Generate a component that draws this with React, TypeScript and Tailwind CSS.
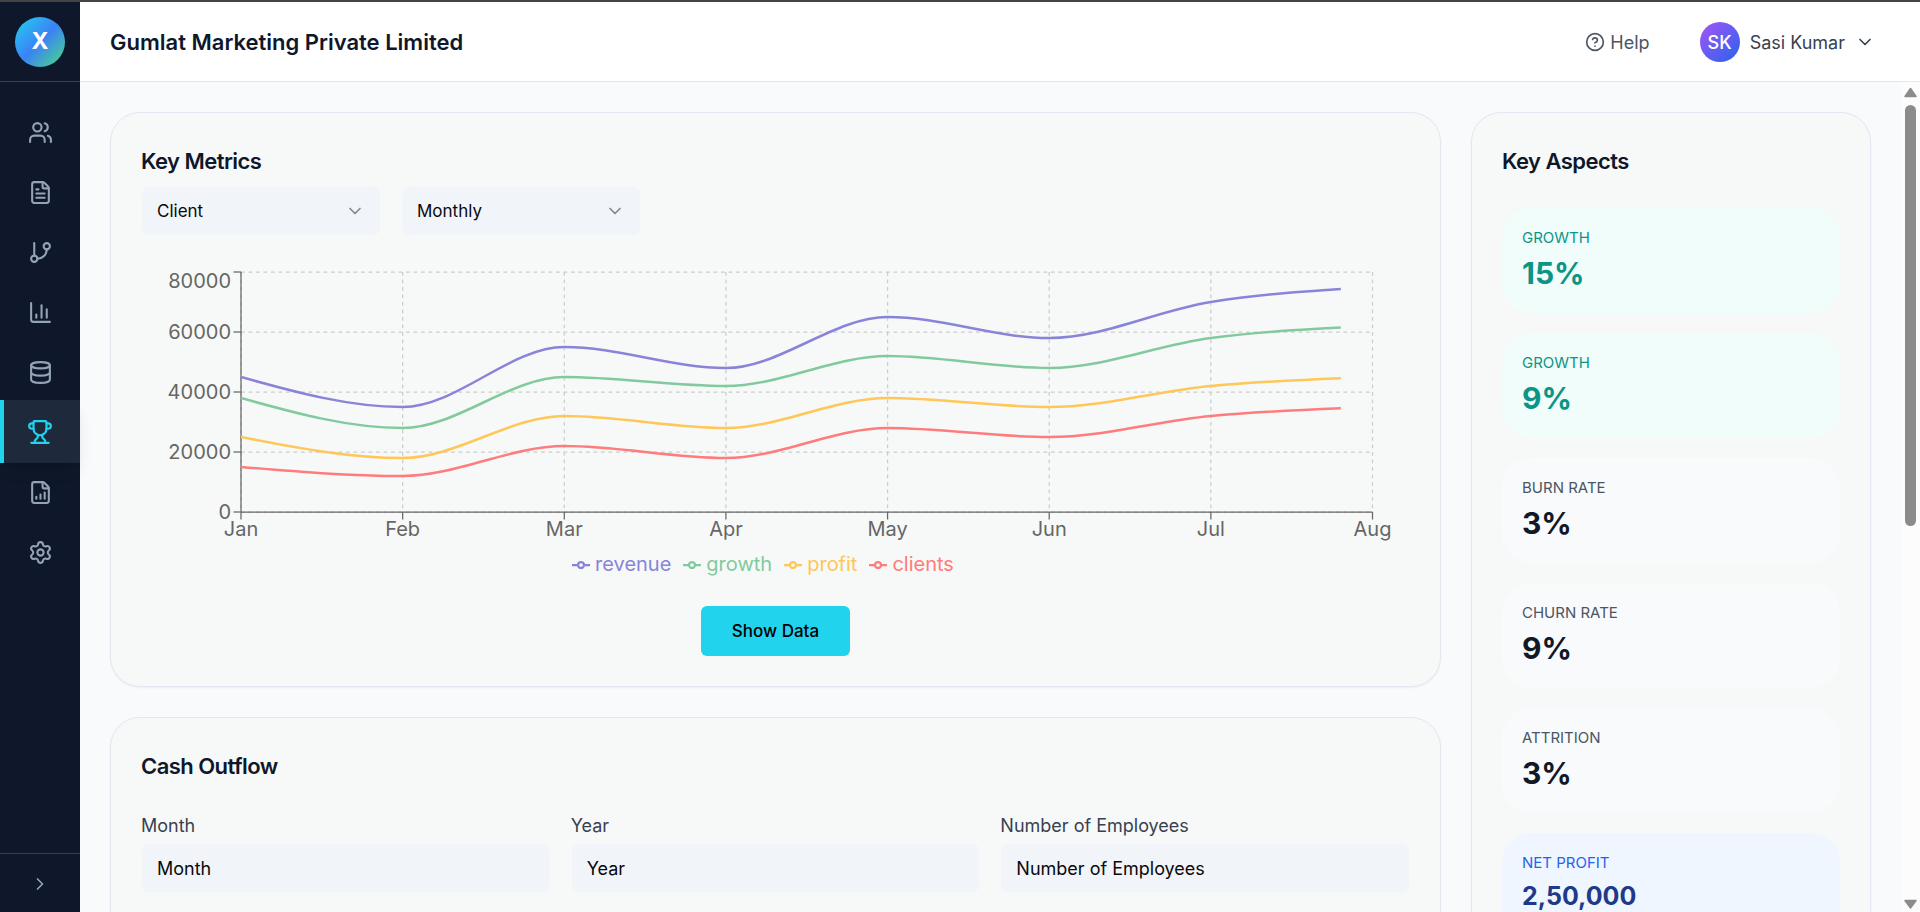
import { useEffect, useId, useRef, useState } from "react";
import type { LucideIcon } from "lucide-react";
import {
  ChartColumn,
  ChevronDown,
  ChevronRight,
  CircleQuestionMark,
  Database,
  FileChartColumnIncreasing,
  FileText,
  GitBranch,
  Settings,
  Trophy,
  Users,
} from "lucide-react";

type Point = [number, number];

const navItems: { label: string; icon: LucideIcon; active?: boolean }[] = [
  { label: "Clients", icon: Users },
  { label: "Documents", icon: FileText },
  { label: "Workflows", icon: GitBranch },
  { label: "Analytics", icon: ChartColumn },
  { label: "Data", icon: Database },
  { label: "Performance", icon: Trophy, active: true },
  { label: "Reports", icon: FileChartColumnIncreasing },
  { label: "Settings", icon: Settings },
];

const months = ["Jan", "Feb", "Mar", "Apr", "May", "Jun", "Jul", "Aug"];

const series = [
  { name: "revenue", color: "#8884d8", values: [45000, 35000, 55000, 48000, 65000, 58000, 70000, 75000] },
  { name: "growth", color: "#82ca9d", values: [38000, 28000, 45000, 42000, 52000, 48000, 58000, 62000] },
  { name: "profit", color: "#ffc658", values: [25000, 18000, 32000, 28000, 38000, 35000, 42000, 45000] },
  { name: "clients", color: "#ff7c7c", values: [15000, 12000, 22000, 18000, 28000, 25000, 32000, 35000] },
];

const aspects = [
  { label: "GROWTH", value: "15%", card: "bg-[#f0fdfa]", labelColor: "text-[#0d9488]", valueStyle: "text-3xl leading-[40px] text-[#0d9488]" },
  { label: "GROWTH", value: "9%", card: "bg-[#f0fdfa]", labelColor: "text-[#0d9488]", valueStyle: "text-3xl leading-[40px] text-[#0d9488]" },
  { label: "BURN RATE", value: "3%", card: "bg-[#f9fafc]", labelColor: "text-[#4b5563]", valueStyle: "text-3xl leading-[40px] text-[#111827]" },
  { label: "CHURN RATE", value: "9%", card: "bg-[#f9fafc]", labelColor: "text-[#4b5563]", valueStyle: "text-3xl leading-[40px] text-[#111827]" },
  { label: "ATTRITION", value: "3%", card: "bg-[#f9fafc]", labelColor: "text-[#4b5563]", valueStyle: "text-3xl leading-[40px] text-[#111827]" },
  { label: "NET PROFIT", value: "2,50,000", card: "bg-[#eff6ff]", labelColor: "text-[#2563eb]", valueStyle: "text-[25px] leading-[36px] text-[#1e3a8a]" },
];

// Monotone cubic interpolation, so the curve never overshoots its points.
function monotonePath(points: Point[]): string {
  const n = points.length;
  const slopes: number[] = [];
  for (let i = 0; i < n - 1; i++) {
    slopes.push((points[i + 1][1] - points[i][1]) / (points[i + 1][0] - points[i][0]));
  }
  const tangents: number[] = new Array(n).fill(0);
  for (let i = 1; i < n - 1; i++) {
    const a = slopes[i - 1];
    const b = slopes[i];
    tangents[i] =
      (Math.sign(a) + Math.sign(b)) * Math.min(Math.abs(a), Math.abs(b), 0.5 * Math.abs((a + b) / 2)) || 0;
  }
  tangents[0] = (3 * slopes[0] - tangents[1]) / 2;
  tangents[n - 1] = (3 * slopes[n - 2] - tangents[n - 2]) / 2;

  let d = `M${points[0][0]},${points[0][1]}`;
  for (let i = 0; i < n - 1; i++) {
    const [x0, y0] = points[i];
    const [x1, y1] = points[i + 1];
    const dx = (x1 - x0) / 3;
    d += `C${x0 + dx},${y0 + dx * tangents[i]},${x1 - dx},${y1 - dx * tangents[i + 1]},${x1},${y1}`;
  }
  return d;
}

function MetricsChart() {
  const box = useRef<HTMLDivElement>(null);
  const [width, setWidth] = useState(1269);
  const clipId = useId();

  useEffect(() => {
    const node = box.current;
    if (!node) return;
    const observer = new ResizeObserver(([entry]) => setWidth(entry.contentRect.width));
    observer.observe(node);
    return () => observer.disconnect();
  }, []);

  const left = 100;
  const right = width - 37.5;
  const top = 6;
  const bottom = 246;
  const step = (right - left) / (months.length - 1);
  const yOf = (value: number) => bottom - (value / 80000) * (bottom - top);

  return (
    <div ref={box} className="w-full">
      <svg width={width} height={283} className="block" role="img" aria-label="Monthly key metrics">
        <defs>
          <clipPath id={clipId}>
            <rect x={left} y={0} width={(right - left) * 0.972} height={283} />
          </clipPath>
        </defs>
        <g stroke="#ccc" strokeWidth="1.25" strokeDasharray="3.75 3.75">
          {[0, 20000, 40000, 60000, 80000].map((v) => (
            <line key={v} x1={left} x2={right} y1={yOf(v)} y2={yOf(v)} />
          ))}
          {months.map((m, i) => (
            <line key={m} x1={left + i * step} x2={left + i * step} y1={top} y2={bottom} />
          ))}
        </g>
        <g stroke="#666" strokeWidth="1.25">
          <line x1={left} x2={right} y1={bottom} y2={bottom} />
          <line x1={left} x2={left} y1={top} y2={bottom} />
          {[0, 20000, 40000, 60000, 80000].map((v) => (
            <line key={v} x1={left - 7.5} x2={left} y1={yOf(v)} y2={yOf(v)} />
          ))}
          {months.map((m, i) => (
            <line key={m} x1={left + i * step} x2={left + i * step} y1={bottom} y2={bottom + 7.5} />
          ))}
        </g>
        <g fill="#666" fontSize="20">
          {[0, 20000, 40000, 60000, 80000].map((v) => (
            <text key={v} x={left - 10} y={Math.max(yOf(v), 15) + 7} textAnchor="end">
              {v}
            </text>
          ))}
          {months.map((m, i) => (
            <text key={m} x={left + i * step} y={bottom + 24} textAnchor="middle">
              {m}
            </text>
          ))}
        </g>
        <g fill="none" strokeWidth="2.5" clipPath={`url(#${clipId})`}>
          {series.map((s) => (
            <path
              key={s.name}
              stroke={s.color}
              d={monotonePath(s.values.map((v, i): Point => [left + i * step, yOf(v)]))}
            />
          ))}
        </g>
      </svg>
      <ul className="flex justify-center pr-[38px] pl-[25px] text-xl leading-[30px]">
        {series.map((s) => (
          <li key={s.name} className="mr-3 flex items-center gap-[5px]" style={{ color: s.color }}>
            <svg width="18" height="18" viewBox="0 0 32 32" fill="none" stroke="currentColor" strokeWidth="4" className="mt-0.5" aria-hidden="true">
              <path d="M0,16h10.667A5.333,5.333,0,1,1,21.333,16H32M21.333,16A5.333,5.333,0,1,1,10.667,16" />
            </svg>
            {s.name}
          </li>
        ))}
      </ul>
    </div>
  );
}

function FilterSelect({ label, options }: { label: string; options: string[] }) {
  return (
    <div className="relative w-60">
      <select
        aria-label={label}
        className="h-[50px] w-full appearance-none rounded-lg border border-[#f7f9f8] bg-[#f1f4f9] px-[15px] pt-0.5 text-[17px] text-[#0a0a0a]"
      >
        {options.map((o) => (
          <option key={o}>{o}</option>
        ))}
      </select>
      <ChevronDown size={20} strokeWidth={2} className="pointer-events-none absolute top-[15px] right-4 text-[#858789]" />
    </div>
  );
}

function Field({ label }: { label: string }) {
  const id = useId();
  return (
    <div className="flex min-w-0 flex-1 flex-col gap-[5px]">
      <label htmlFor={id} className="text-[18px] leading-[25px] text-[#374151]">
        {label}
      </label>
      <input
        id={id}
        placeholder={label}
        className="h-[50px] w-full rounded-lg border border-[#f7f9f8] bg-[#f1f4f9] px-[15px] text-[18px] placeholder:text-[#0a0a0a]"
      />
    </div>
  );
}

function Scrollbar() {
  return (
    <div aria-hidden="true" className="flex w-[19px] shrink-0 flex-col items-center bg-[#fcfcfc] pt-[5px] pb-0.5">
      <svg width="13" height="11" viewBox="0 0 13 11">
        <path d="M6.5 1.5 12 9.5H1z" fill="#8b8b8b" stroke="#8b8b8b" strokeWidth="1.5" strokeLinejoin="round" />
      </svg>
      <div className="my-[7px] min-h-0 w-full flex-1">
        <div className="mx-auto h-[53.5%] w-[11px] rounded-full bg-[#8b8b8b]" />
      </div>
      <svg width="13" height="11" viewBox="0 0 13 11">
        <path d="M1 1.5h11L6.5 9z" fill="#8b8b8b" stroke="#8b8b8b" strokeWidth="1.5" strokeLinejoin="round" />
      </svg>
    </div>
  );
}

const cardClass = "rounded-[30px] border border-[#e2e8f0] bg-[#f7f9f8] p-[30px] shadow-xs";
const titleClass = "text-[22px] leading-[37px] font-semibold tracking-tight text-[#0f172a]";

export default function App() {
  return (
    <div className="flex h-screen flex-col overflow-hidden border-t-2 border-[#444] bg-[#f9fafc] font-[Inter,sans-serif]">
      <div className="flex min-h-0 flex-1">
        <aside className="flex w-20 shrink-0 flex-col bg-[#0f172a]">
          <div className="flex h-20 items-center justify-center border-b border-[#334155]">
            <div className="flex size-[50px] items-center justify-center rounded-full bg-linear-to-br/srgb from-[#22d3ee] via-[#3b82f6] to-[#4ade80] text-[23px] font-bold text-white">
              X
            </div>
          </div>
          <nav className="flex-1 pt-5">
            {navItems.map(({ label, icon: Icon, active }) => (
              <a
                key={label}
                href="#"
                aria-label={label}
                aria-current={active ? "page" : undefined}
                className={
                  active
                    ? "relative -mt-0.5 -mb-px flex h-[63px] items-center justify-center bg-[#1e293b] text-[#22d3ee] shadow-lg"
                    : "flex h-[60px] items-center justify-center text-[#94a3b8]"
                }
              >
                {active && <span className="absolute inset-y-0 left-0 w-1 bg-[#22d3ee]" />}
                <Icon size={active ? 26 : 25} strokeWidth={2} />
              </a>
            ))}
          </nav>
          <button aria-label="Expand sidebar" className="flex h-[59px] items-center justify-center border-t border-[#334155] pt-0.5 text-[#94a3b8]">
            <ChevronRight size={20} strokeWidth={2} />
          </button>
        </aside>

        <div className="flex min-w-0 flex-1 flex-col">
          <header className="flex h-20 shrink-0 items-center justify-between border-b border-[#e2e8f0] bg-white pt-px pr-[45px] pl-[30px]">
            <h1 className="text-[22px] font-semibold text-[#0f172a]">Gumlat Marketing Private Limited</h1>
            <div className="flex items-center gap-[50px]">
              <a href="#" className="flex items-center gap-[5px] text-[18px] text-[#4b5563]">
                <CircleQuestionMark size={20} strokeWidth={2} />
                Help
              </a>
              <button className="flex items-center gap-[10px] text-[18px] text-[#374151]">
                <span className="flex size-10 items-center justify-center rounded-full bg-linear-to-br/srgb from-[#a855f7] to-[#2563eb] font-medium text-white">
                  SK
                </span>
                Sasi Kumar
                <ChevronDown size={20} strokeWidth={2} />
              </button>
            </div>
          </header>

          <div className="flex min-h-0 flex-1">
            <main className="flex min-w-0 flex-1 items-start gap-[30px] overflow-y-auto p-[30px] [scrollbar-width:none]">
              <div className="flex min-w-0 flex-1 flex-col gap-[30px]">
                <section className={cardClass}>
                  <h2 className={titleClass}>Key Metrics</h2>
                  <div className="mt-1.5 flex gap-5">
                    <FilterSelect label="Group by" options={["Client", "Project", "Team"]} />
                    <FilterSelect label="Period" options={["Monthly", "Quarterly", "Yearly"]} />
                  </div>
                  <div className="mt-[30px]">
                    <MetricsChart />
                  </div>
                  <div className="mt-[27px] flex justify-center">
                    <button className="h-[50px] rounded-md bg-[#22d3ee] px-[31px] pt-px text-[17px] font-medium text-black">
                      Show Data
                    </button>
                  </div>
                </section>

                <section className={`${cardClass} min-h-[400px]`}>
                  <h2 className={titleClass}>Cash Outflow</h2>
                  <form className="mt-7 flex gap-5">
                    <Field label="Month" />
                    <Field label="Year" />
                    <Field label="Number of Employees" />
                  </form>
                </section>
              </div>

              <section className={`${cardClass} w-[400px] shrink-0`}>
                <h2 className={titleClass}>Key Aspects</h2>
                <dl className="mt-7 flex flex-col gap-5">
                  {aspects.map((a, i) => (
                    <div key={i} className={`h-[105px] rounded-[30px] px-5 pt-5 ${a.card}`}>
                      <dt className={`text-[15px] leading-5 ${a.labelColor}`}>{a.label}</dt>
                      <dd className={`mt-[5px] font-bold ${a.valueStyle}`}>{a.value}</dd>
                    </div>
                  ))}
                </dl>
              </section>
            </main>
            <Scrollbar />
          </div>
        </div>
      </div>
    </div>
  );
}
